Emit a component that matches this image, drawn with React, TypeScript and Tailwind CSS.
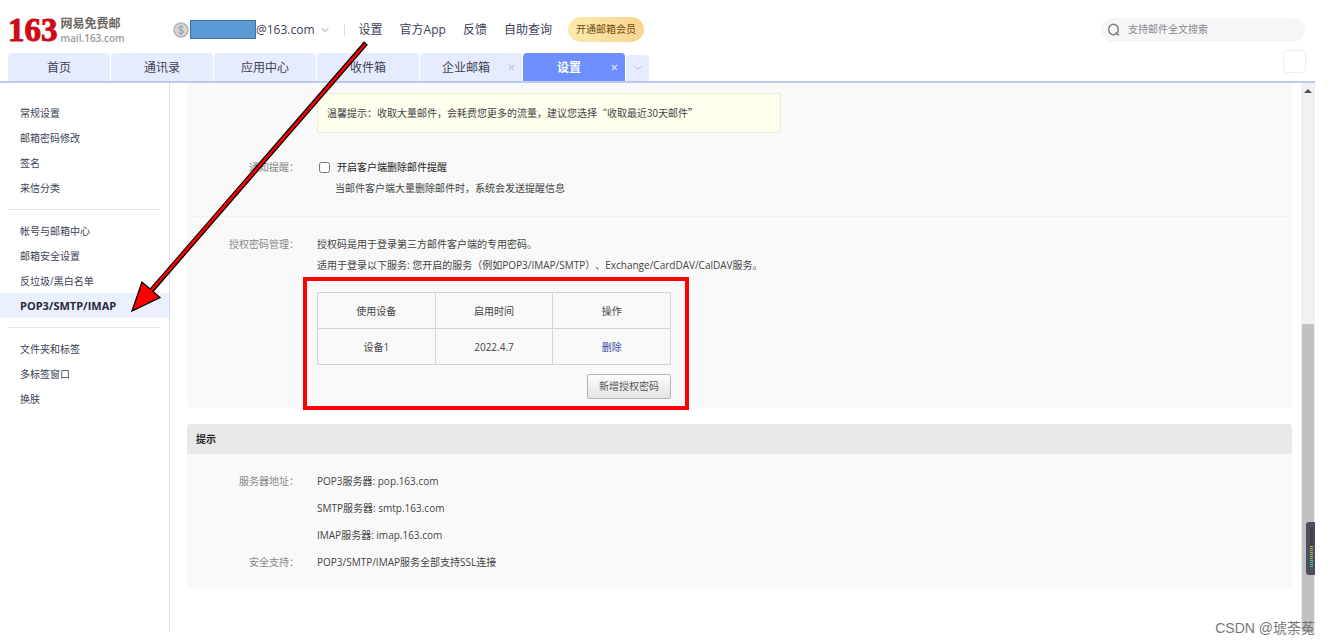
import { useState } from 'react'
import type { ReactNode } from 'react'
import { ChevronDown, X } from 'lucide-react'

const NAV_LINKS = ['设置', '官方App', '反馈', '自助查询']

const TABS = [
  { label: '首页' },
  { label: '通讯录' },
  { label: '应用中心' },
  { label: '收件箱' },
  { label: '企业邮箱', closable: true },
  { label: '设置', closable: true, active: true },
]

const MENU = [
  ['常规设置', '邮箱密码修改', '签名', '来信分类'],
  ['帐号与邮箱中心', '邮箱安全设置', '反垃圾/黑白名单', 'POP3/SMTP/IMAP'],
  ['文件夹和标签', '多标签窗口', '换肤'],
]

const SERVERS = ['POP3服务器: pop.163.com', 'SMTP服务器: smtp.163.com', 'IMAP服务器: imap.163.com']

export default function App() {
  return (
    <div className="relative flex min-h-screen flex-col overflow-hidden bg-white pr-[15px] pb-3 font-['Open_Sans','Noto_Sans_CJK_SC',sans-serif] text-[10px] text-[#444] [text-spacing-trim:space-all]">
      <Header />
      <TabBar />
      <div className="flex flex-1">
        <Sidebar />
        <main className="min-w-0 flex-1 pr-[9px] pl-[17px]">
          <ClientSettings />
          <Tips />
        </main>
        <ScrollTrack />
      </div>
      <Arrow />
      <p className="absolute right-[15px] bottom-1.5 font-['Liberation_Sans','Noto_Sans_CJK_SC',sans-serif] text-[14px] leading-5 text-[#777]">
        CSDN @琥荼菟
      </p>
    </div>
  )
}

function Header() {
  return (
    <header className="flex h-[53px] items-center pt-1.5 pr-2.5 pl-2 text-[12px] text-[#3c4155]">
      <a href="#" className="flex w-[165px] items-center gap-[3px]">
        <span className="font-['Liberation_Serif',serif] text-[33px] leading-8 font-bold text-[#cf0a17] [-webkit-text-stroke:1px_#cf0a17]">
          163
        </span>
        <span className="flex flex-col font-bold">
          <span className="leading-4 text-[#6b6661]">网易免费邮</span>
          <span className="text-[10px] leading-3 font-semibold text-[#999]">mail.163.com</span>
        </span>
      </a>
      <svg viewBox="0 0 16 16" className="size-4" fill="none">
        <circle cx="8" cy="8" r="7" fill="#d6d6d6" stroke="#b4b4b4" strokeWidth="1.5" />
        <path d="M10.5 6C10 4 5.500 4 5.500 6.200C5.500 8.600 10.500 7.400 10.500 9.800C10.500 12 6 12 5.500 10M8 3V13" stroke="#999" />
      </svg>
      <span className="ml-px h-[19px] w-[66px] border border-[#41719c] bg-[#5b9bd5]" />
      <button type="button" className="flex items-center gap-1">
        @163.com
        <ChevronDown size={12} className="text-[#999]" />
      </button>
      <span className="mr-3.5 ml-[13px] h-3 w-px bg-[#ddd]" />
      <nav className="flex items-center gap-[17px]">
        {NAV_LINKS.map((label) => (
          <a key={label} href="#">
            {label}
          </a>
        ))}
      </nav>
      <button
        type="button"
        className="ml-4 h-[25px] rounded-full bg-linear-to-r from-[#fbeab0] to-[#f9d48e] px-2 text-[10px] text-[#6f4a12]"
      >
        开通邮箱会员
      </button>
      <label className="ml-auto flex h-6 w-[204px] items-center gap-[7px] rounded-full bg-[#f6f6f6] px-1.5">
        <svg viewBox="0 0 14 14" className="size-3.5" fill="none" stroke="#7b7f88" strokeWidth="1.5">
          <ellipse cx="6.500" cy="6.500" rx="4.800" ry="5.300" />
          <path d="m8.500 9.500 3.500 3" />
        </svg>
        <input
          aria-label="支持邮件全文搜索"
          placeholder="支持邮件全文搜索"
          className="min-w-0 flex-1 text-[10px] outline-none placeholder:text-[#85888f]"
        />
      </label>
    </header>
  )
}

function TabBar() {
  return (
    <div className="relative flex h-[30px] items-end gap-px border-b-2 border-[#bccaf3] pl-2 text-[12px] text-[#3c4155]">
      {TABS.map((tab) => (
        <div
          key={tab.label}
          className={
            tab.active
              ? 'relative h-7 w-[102px] rounded-t bg-[#6e8fff] font-bold text-white'
              : 'relative h-7 w-[102px] rounded-t bg-[#e6ecfe]'
          }
        >
          <button type="button" className={tab.closable ? 'h-full w-full pt-0.5 pr-2.5' : 'h-full w-full pt-0.5'}>
            {tab.label}
          </button>
          {tab.closable && (
            <button type="button" aria-label="关闭" className="absolute top-2.5 right-1.5">
              <X size={9} strokeWidth={3} className={tab.active ? 'text-[#d5defd]' : 'text-[#c3c8d6]'} />
            </button>
          )}
        </div>
      ))}
      <button
        type="button"
        aria-label="更多"
        className="flex h-[26px] w-[23px] items-center justify-center rounded-t bg-[#e6ecfe]"
      >
        <ChevronDown size={12} className="text-[#b4bacb]" />
      </button>
      <span className="absolute right-[9px] bottom-2 size-[23px] rounded-sm border border-[#ededed] bg-white" />
    </div>
  )
}

function Sidebar() {
  const [current, setCurrent] = useState('POP3/SMTP/IMAP')

  return (
    <aside className="w-[170px] shrink-0 border-r border-[#d6dff7] pt-[17px] text-[#3c4155]">
      {MENU.map((group, i) => (
        <div key={group[0]}>
          {i > 0 && <hr className="mt-[9px] mr-[9px] mb-2 ml-2 border-[#e6e6e6]" />}
          {group.map((item) => (
            <a
              key={item}
              href="#"
              onClick={() => setCurrent(item)}
              className={
                item === current
                  ? 'block bg-[#ebf0ff] pl-5 text-[11px] leading-[25px] font-bold text-[#262a3b]'
                  : 'block pt-px pl-5 leading-6'
              }
            >
              {item}
            </a>
          ))}
        </div>
      ))}
    </aside>
  )
}

function Row({ label, children }: { label?: string; children: ReactNode }) {
  return (
    <div className="flex gap-[18px]">
      <div className="w-[112px] shrink-0 text-right text-[#888]">{label}</div>
      <div className="min-w-0 flex-1">{children}</div>
    </div>
  )
}

function ClientSettings() {
  return (
    <section className="rounded-b bg-[#f9f9f9] pt-2.5 pb-[9px] leading-[21px]">
      <Row>
        <p className="w-[464px] border border-[#ebecd4] bg-[#ffffed] px-[9px] font-['Noto_Sans_CJK_SC',sans-serif] leading-[38px]">
          温馨提示：收取大量邮件，会耗费您更多的流量，建议您选择“收取最近30天邮件”
        </p>
      </Row>
      <div className="mt-6 mb-[17px]">
        <Row label="通知提醒：">
          <label className="flex items-center gap-[7px] pl-0.5 text-[#222]">
            <input type="checkbox" className="size-[11px]" />
            开启客户端删除邮件提醒
          </label>
          <p className="pl-[18px]">当邮件客户端大量删除邮件时，系统会发送提醒信息</p>
        </Row>
      </div>
      <hr className="border-[#f1f1f1]" />
      <div className="mt-[17px]">
        <Row label="授权密码管理：">
          <p>授权码是用于登录第三方邮件客户端的专用密码。</p>
          <p>适用于登录以下服务: 您开启的服务（例如POP3/IMAP/SMTP）、Exchange/CardDAV/CalDAV服务。</p>
          <DeviceTable />
        </Row>
      </div>
    </section>
  )
}

function DeviceTable() {
  return (
    <div className="relative mt-4 w-[354px]">
      <table className="w-full table-fixed border-collapse text-center">
        <thead>
          <tr className="h-9">
            <th className="border border-[#d5d5d5] pt-0.5 font-normal">使用设备</th>
            <th className="border border-[#d5d5d5] pt-0.5 font-normal">启用时间</th>
            <th className="border border-[#d5d5d5] pt-0.5 font-normal">操作</th>
          </tr>
        </thead>
        <tbody>
          <tr className="h-9">
            <td className="border border-[#d5d5d5] pt-0.5">设备1</td>
            <td className="border border-[#d5d5d5] pt-0.5">2022.4.7</td>
            <td className="border border-[#d5d5d5] pt-0.5">
              <a href="#" className="text-[#3a4da8]">
                删除
              </a>
            </td>
          </tr>
        </tbody>
      </table>
      <button
        type="button"
        className="mt-[9px] ml-auto block h-[25px] w-[84px] rounded-xs border border-[#b4b4b4] bg-linear-to-b from-[#fcfcfc] to-[#e4e4e4] text-[#555]"
      >
        新增授权密码
      </button>
      {/* highlight frame around the device list */}
      <div className="pointer-events-none absolute -top-[15px] -right-[18px] -bottom-[11px] -left-[14px] border-4 border-[#fe0000]" />
    </div>
  )
}

function Tips() {
  return (
    <section className="mt-4 overflow-hidden rounded bg-[#f9f9f9] pb-[13px] leading-[27px]">
      <h2 className="mb-3.5 bg-[#e8e8e8] px-[9px] leading-[30px] font-bold text-[#222]">提示</h2>
      <Row label="服务器地址：">
        {SERVERS.map((server) => (
          <p key={server}>{server}</p>
        ))}
      </Row>
      <Row label="安全支持：">POP3/SMTP/IMAP服务全部支持SSL连接</Row>
    </section>
  )
}

function ScrollTrack() {
  return (
    <div className="relative flex w-3.5 shrink-0 flex-col items-center bg-[#f1f1f1]">
      <svg viewBox="0 0 8 4" className="mt-1.5 h-1 w-2" fill="#505050">
        <path d="M4 0 8 4H0Z" />
      </svg>
      <div className="grow-[231]" />
      <div className="w-3 grow-[308] bg-[#c1c1c1]" />
      <LevelMeter />
    </div>
  )
}

function LevelMeter() {
  return (
    <svg viewBox="0 0 9 53" className="absolute right-0 bottom-[57px] h-[53px] w-[9px]">
      <path d="M9 0H3Q0 0 0 3v47q0 3 3 3h6Z" fill="#4b4f60" />
      {Array.from({ length: 20 }, (_, i) => (
        <rect
          key={i}
          x="4"
          y={6 + i * 2}
          width="3"
          height="1"
          fill={i < 9 ? '#30333f' : i < 13 ? '#b0b04a' : i < 17 ? '#7fb86c' : '#35c4a0'}
        />
      ))}
    </svg>
  )
}

function Arrow() {
  return (
    <svg viewBox="0 0 380 320" className="pointer-events-none absolute top-0 left-0 h-80 w-[380px]">
      <path d="M366 43 151 291" stroke="#000" strokeWidth="5" />
      <path d="m132 311 10-29 18 15.500Z" fill="#fe0000" stroke="#000" strokeWidth="1.300" />
      <path d="M365.300 44 149 293" stroke="#fe0000" strokeWidth="2.600" />
    </svg>
  )
}
